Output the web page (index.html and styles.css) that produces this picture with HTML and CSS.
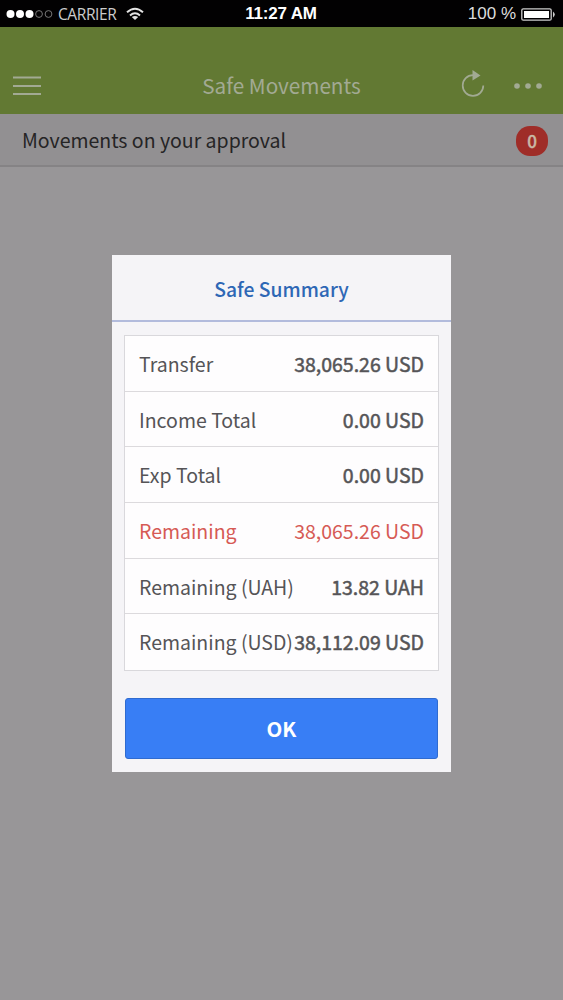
FILE: index.html
```html
<!DOCTYPE html>
<html lang="en">

<head>
  <meta charset="UTF-8">
  <meta name="viewport" content="width=device-width, initial-scale=1.0">
  <title>Safe Movements</title>
  <link rel="stylesheet" href="styles.css">
</head>

<body>

  <div class="status-bar">
    <div class="status-left">
      <svg class="signal" width="48" height="10" viewBox="0 0 48 10">
        <g fill="#fff">
          <circle cx="4.5" cy="5" r="4" />
          <circle cx="14" cy="5" r="4" />
          <circle cx="23.5" cy="5" r="4" />
        </g>
        <g fill="none" stroke="#777">
          <circle cx="33" cy="5" r="3.4" />
          <circle cx="42.5" cy="5" r="3.4" />
        </g>
      </svg>
      <span class="carrier">CARRIER</span>
      <svg class="wifi" width="18" height="14" viewBox="0 0 18 14">
        <g fill="none" stroke="#e4e4e4" stroke-width="2">
          <path d="M1 5.2Q9 -1.8 17 5.2" />
          <path d="M4 8.4Q9 4.2 14 8.4" />
        </g>
        <path d="M9 13L5.8 10Q9 7.8 12.2 10Z" fill="#e4e4e4" />
      </svg>
    </div>
    <span class="time">11:27 AM</span>
    <div class="status-right">
      <span class="percent">100 %</span>
      <svg class="battery" width="35" height="13" viewBox="0 0 35 13">
        <rect x="0.8" y="0.8" width="29.4" height="11.4" rx="1.5" fill="none" stroke="#ccc" stroke-width="1.3" />
        <rect x="3" y="3" width="25" height="7" fill="#fff" />
        <path d="M32 3.5Q35.6 6.5 32 9.5Z" fill="#ccc" />
      </svg>
    </div>
  </div>

  <header class="header">
    <svg class="menu" width="28" height="20" viewBox="0 0 28 20">
      <path d="M0 1.5H28M0 10H28M0 18H28" stroke="#a2aa93" stroke-width="2.2" />
    </svg>
    <h1 class="page-title">Safe Movements</h1>
    <div class="actions">
      <svg class="refresh" width="24" height="28" viewBox="0 0 24 28">
        <path d="M14.2 5.2H12A10.3 10.3 0 1 0 22.3 15.5" fill="none" stroke="#a2aa93" stroke-width="1.7" />
        <path d="M11.5 0L19.5 5.5L11.5 10.5Z" fill="#a2aa93" />
      </svg>
      <svg class="more" width="28" height="6" viewBox="0 0 28 6">
        <g fill="#a2aa93">
          <circle cx="3" cy="3" r="2.8" />
          <circle cx="14" cy="3" r="2.8" />
          <circle cx="25" cy="3" r="2.8" />
        </g>
      </svg>
    </div>
  </header>

  <div class="approval">
    <span>Movements on your approval</span>
    <span class="badge">0</span>
  </div>

  <div class="popup">
    <h2 class="popup-title">Safe Summary</h2>
    <div class="popup-body">
      <ul class="list">
        <li class="item"><span>Transfer</span><span class="value">38,065.26 USD</span></li>
        <li class="item"><span>Income Total</span><span class="value">0.00 USD</span></li>
        <li class="item"><span>Exp Total</span><span class="value">0.00 USD</span></li>
        <li class="item item-red"><span>Remaining</span><span class="value">38,065.26 USD</span></li>
        <li class="item"><span>Remaining (UAH)</span><span class="value">13.82 UAH</span></li>
        <li class="item"><span>Remaining (USD)</span><span class="value">38,112.09 USD</span></li>
      </ul>
      <button class="ok" type="button">OK</button>
    </div>
  </div>

</body>

</html>
```

FILE: styles.css
```css
* {
  box-sizing: border-box;
}

body {
  margin: 0;
  height: 1000px;
  overflow: hidden;
  font-family: "Noto Sans CJK SC", "Noto Sans", sans-serif;
  font-size: 19.5px;
  background-color: #989698;
}

/* Status bar */
.status-bar {
  display: grid;
  grid-template-columns: 1fr auto 1fr;
  align-items: center;
  height: 27px;
  padding: 0 7px 0 6px;
  background-color: #020102;
  color: #fff;
  line-height: 28px;
}

.status-left,
.status-right {
  display: flex;
  align-items: center;
}

.status-right {
  justify-content: flex-end;
}

.carrier {
  margin-left: 4px;
  font-family: "Open Sans", sans-serif;
  font-size: 15.5px;
  letter-spacing: -0.4px;
  color: #ccc;
}

.wifi {
  margin-left: 10px;
}

.time {
  font-family: "Liberation Sans", Arial, sans-serif;
  font-size: 17px;
  font-weight: bold;
  letter-spacing: -0.2px;
}

.percent {
  margin-right: 5px;
  font-family: "Liberation Sans", Arial, sans-serif;
  font-size: 17px;
  color: #ddd;
}

/* Header */
.header {
  display: grid;
  grid-template-columns: 28px 1fr 81px;
  align-items: center;
  height: 87px;
  padding: 30px 21px 0 13px;
  background-color: #627933;
}

.page-title {
  margin: -1px 0 0 61px;
  font-size: 20.7px;
  font-weight: 400;
  line-height: 30px;
  text-align: center;
  color: #a2aa93;
}

.actions {
  display: flex;
  align-items: center;
  justify-content: flex-end;
  gap: 29px;
}

.refresh {
  margin-top: -4px;
}

.approval {
  display: flex;
  align-items: center;
  justify-content: space-between;
  height: 53px;
  padding: 0 15px 0 22px;
  border-bottom: 2px solid #858385;
  background-color: #929092;
  color: #252425;
  font-size: 19.5px;
}

.badge {
  width: 32px;
  height: 30px;
  margin-top: 3px;
  border-radius: 14px;
  background-color: #9f2d28;
  color: #c9b9a6;
  font-size: 17px;
  font-weight: 500;
  line-height: 30px;
  text-align: center;
  -webkit-text-stroke: 0.4px currentColor;
}

/* Popup */
.popup {
  width: 339px;
  height: 517px;
  margin: 88px auto 0;
  background-color: #f5f4f7;
}

.popup-title {
  height: 67px;
  margin: 0;
  border-bottom: 2px solid #b2bbdc;
  color: #2e67b5;
  font-size: 19.3px;
  font-weight: 500;
  line-height: 68px;
  text-align: center;
}

.popup-body {
  padding: 13px 12px 13px;
}

.list {
  margin: 0 0 27px;
  padding: 0;
  border: 1px solid #d9d8dc;
  background-color: #fefdfe;
  list-style: none;
}

.item {
  display: flex;
  justify-content: space-between;
  height: 55.7px;
  padding: 0 14px;
  border-bottom: 1px solid #dcdadd;
  color: #555457;
  line-height: 55px;
  white-space: nowrap;
}

.item:last-child {
  border-bottom: none;
}

.value {
  -webkit-text-stroke: 0.5px currentColor;
}

.item-red {
  color: #d65a55;
}

.item-red .value {
  -webkit-text-stroke: 0;
}

.ok {
  display: block;
  width: 313px;
  height: 61px;
  margin: 0 auto;
  padding: 0 0 1px;
  border: 1px solid #2f6bd0;
  border-radius: 3px;
  background-color: #387ef5;
  color: #fff;
  font-family: inherit;
  font-size: 20.5px;
  font-weight: bold;
}
```
